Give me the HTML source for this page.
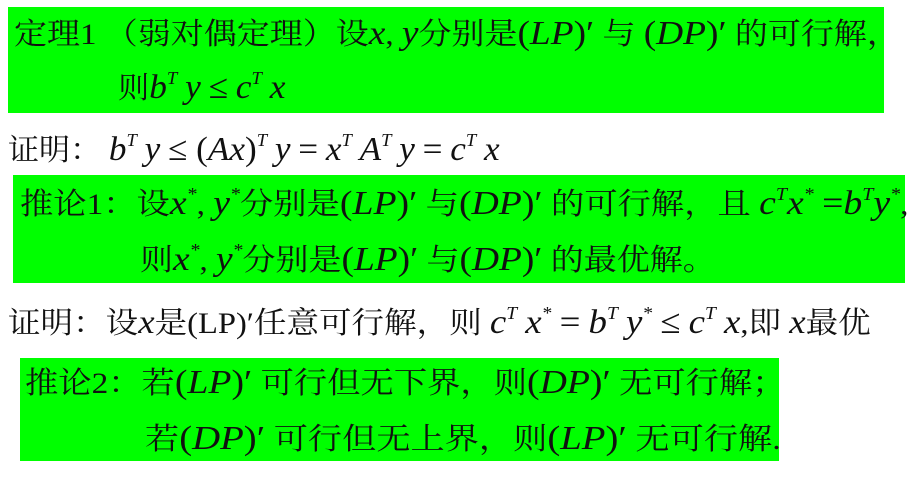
<!DOCTYPE html>
<html><head><meta charset="utf-8"><style>
body{margin:0;width:920px;height:484px;background:#fff;position:relative;overflow:hidden;font-family:"Liberation Serif","Noto Serif CJK SC","Noto Sans CJK SC",serif;color:#111;}
.b{position:absolute;background:#00ff00;}
.l{position:absolute;white-space:nowrap;font-size:30px;line-height:1;transform-origin:0 50%;}
i{font-family:"Liberation Serif",serif;font-style:italic;font-size:34px;}
sup{font-size:18px;vertical-align:0;position:relative;top:-14px;font-style:italic;}
.m{font-family:"Liberation Serif",serif;font-size:34px;}
</style></head><body>
<div class="b" style="left:8px;top:7px;width:876px;height:106px"></div>
<div class="b" style="left:13px;top:175px;width:892px;height:108px"></div>
<div class="b" style="left:20px;top:358px;width:759px;height:103px"></div>

<div class="l" style="left:14px;top:17px;transform:scaleX(1.1)">定理1 （弱对偶定理）设<i>x</i>, <i>y</i>分别是<span class="m">(</span><i>LP</i><span class="m">)′</span> 与 <span class="m">(</span><i>DP</i><span class="m">)′</span> 的可行解，</div>
<div class="l" style="left:118px;top:71px;transform:scaleX(1.04)">则<i>b</i><sup>T</sup> <i>y</i> <span class="m">≤</span> <i>c</i><sup>T</sup> <i>x</i></div>
<div class="l" style="left:8px;top:133px;transform:scaleX(1.035)">证明： <i>b</i><sup>T</sup> <i>y</i> <span class="m">≤ (</span><i>Ax</i><span class="m">)</span><sup>T</sup> <i>y</i> <span class="m">=</span> <i>x</i><sup>T</sup> <i>A</i><sup>T</sup> <i>y</i> <span class="m">=</span> <i>c</i><sup>T</sup> <i>x</i></div>
<div class="l" style="left:20px;top:187px;transform:scaleX(1.11)">推论1：设<i>x</i><sup>*</sup>, <i>y</i><sup>*</sup>分别是<span class="m">(</span><i>LP</i><span class="m">)′</span> 与<span class="m">(</span><i>DP</i><span class="m">)′</span> 的可行解，且 <i>c</i><sup>T</sup><i>x</i><sup>*</sup> <span class="m">=</span><i>b</i><sup>T</sup><i>y</i><sup>*</sup>,</div>
<div class="l" style="left:140px;top:243px;transform:scaleX(1.1)">则<i>x</i><sup>*</sup>, <i>y</i><sup>*</sup>分别是<span class="m">(</span><i>LP</i><span class="m">)′</span> 与<span class="m">(</span><i>DP</i><span class="m">)′</span> 的最优解。</div>
<div class="l" style="left:8px;top:306px;transform:scaleX(1.085)">证明：设<i>x</i>是(LP)′任意可行解，则 <i>c</i><sup>T</sup> <i>x</i><sup>*</sup> <span class="m">=</span> <i>b</i><sup>T</sup> <i>y</i><sup>*</sup> <span class="m">≤</span> <i>c</i><sup>T</sup> <i>x</i>,即 <i>x</i>最优</div>
<div class="l" style="left:25px;top:366px;transform:scaleX(1.11)">推论2：若<span class="m">(</span><i>LP</i><span class="m">)′</span> 可行但无下界，则<span class="m">(</span><i>DP</i><span class="m">)′</span> 无可行解；</div>
<div class="l" style="left:145px;top:422px;transform:scaleX(1.14)">若<span class="m">(</span><i>DP</i><span class="m">)′</span> 可行但无上界，则<span class="m">(</span><i>LP</i><span class="m">)′</span> 无可行解.</div>
</body></html>
